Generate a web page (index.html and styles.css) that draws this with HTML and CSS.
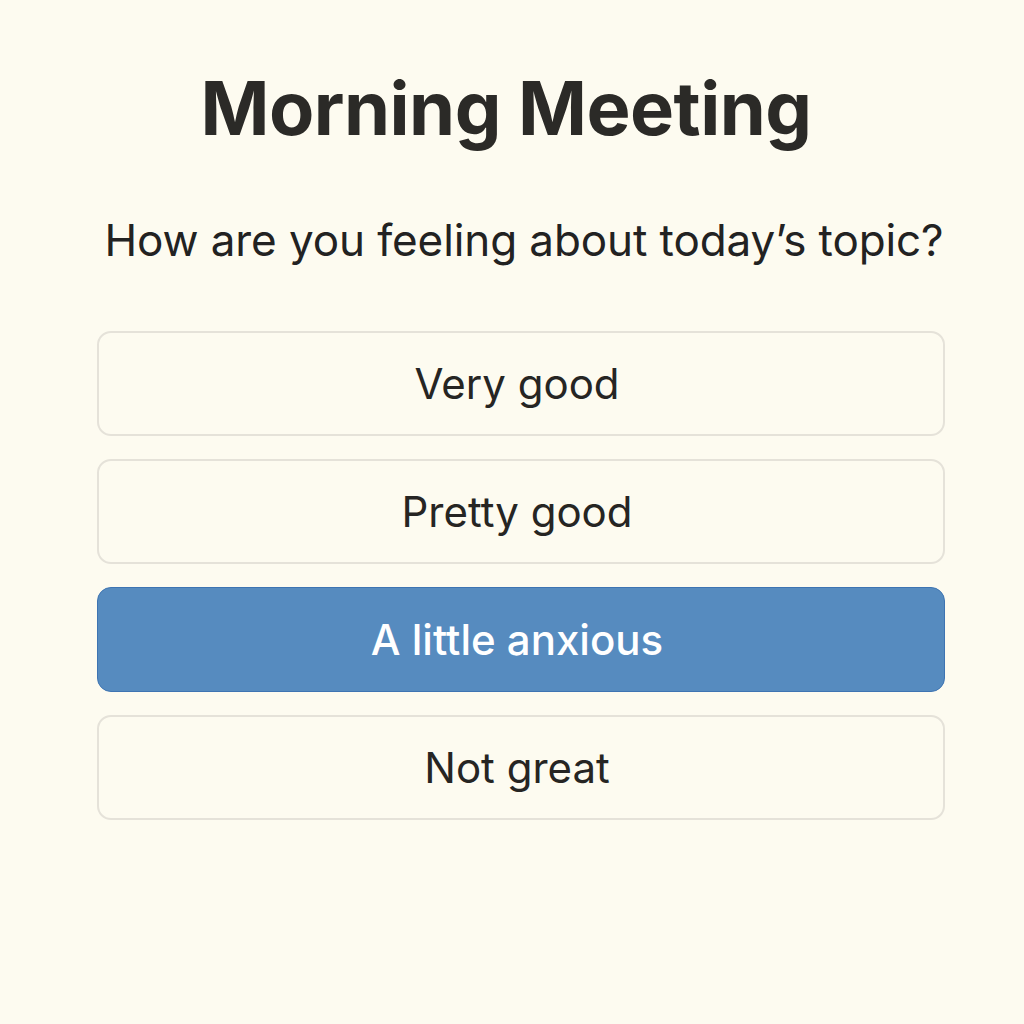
FILE: index.html
```html
<!DOCTYPE html>
<html lang="en">

<head>
  <meta name="viewport" content="width=device-width, initial-scale=1.0">
  <title>Morning Meeting</title>
  <link rel="stylesheet" href="styles.css">
</head>

<body>
  <div id="container">
    <h1 class="title">Morning Meeting</h1>
    <p class="question">How are you feeling about today’s topic?</p>
    <div class="options">
      <button class="option">Very good</button>
      <button class="option">Pretty good</button>
      <button class="option selected">A little anxious</button>
      <button class="option">Not great</button>
    </div>
  </div>
</body>

</html>
```

FILE: styles.css
```css
body {
  margin: 0;
  background-color: #fdfbf0;
  font-family: 'Inter', 'Noto Sans', sans-serif;
  color: #2b2a27;
}

#container {
  width: 848px;
  margin-left: 97px;
  padding-top: 64px;
  display: flex;
  flex-direction: column;
}

.title {
  margin: 0;
  padding-right: 30px;
  text-align: center;
  font-size: 74px;
  font-weight: 700;
  line-height: 88px;
  letter-spacing: -0.5px;
}

.question {
  margin: 60px 0 0;
  padding-left: 6px;
  text-align: center;
  white-space: nowrap;
  font-size: 44px;
  line-height: 56px;
  letter-spacing: -0.1px;
  color: #222;
}

.options {
  margin-top: 63px;
  display: flex;
  flex-direction: column;
  gap: 23px;
}

.option {
  height: 105px;
  padding: 0 8px 0 0;
  background: none;
  border: 2px solid #e5e2d9;
  border-radius: 14px;
  font-family: inherit;
  font-size: 42px;
  color: #262523;
  cursor: pointer;
}

.option.selected {
  background-color: #568bbf;
  border: 1px solid #3e74b2;
  color: white;
  font-weight: 500;
}
```
